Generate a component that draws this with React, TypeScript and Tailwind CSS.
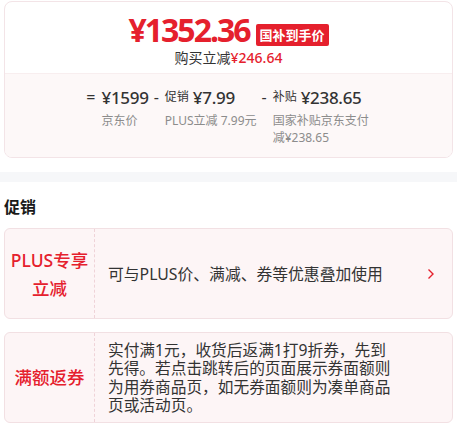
export default function App() {
  return (
    <div className="w-[457px] h-[436px] bg-white overflow-hidden font-['Noto_Sans','Noto_Sans_CJK_SC',sans-serif] text-[#333]">
      <div className="mx-[4px] mt-[1px] rounded-[8px] border border-[#f3e4e7] overflow-hidden">
        <div className="h-[71px] flex flex-col items-center pt-[11px]">
          <div className="flex items-end gap-[6px]">
            <span className="text-[32px] font-bold text-[#e5202d] tracking-[-2px] leading-[34px]">¥1352.36</span>
            <span className="bg-[#e5202d] text-white text-[13px] font-bold px-[4px] h-[22px] mb-[1px] rounded-[2px] flex items-center leading-none">国补到手价</span>
          </div>
          <div className="mt-[1px] text-[14px] leading-[20px]">
            <span className="text-[#333]">购买立减</span>
            <span className="text-[#e5202d] font-medium">¥246.64</span>
          </div>
        </div>
        <div className="h-[84px] bg-[#fdf8f8] border-t border-[#f8eeef] flex justify-center gap-[5px] pt-[12px]">
          <div className="flex gap-[6px]">
            <span className="text-[16px] leading-[22px]">=</span>
            <div className="flex flex-col">
              <div className="flex items-center h-[22px]">
                <span className="text-[17px] font-medium tracking-[-0.3px] leading-none">¥1599</span>
              </div>
              <div className="mt-[4px] text-[12px] leading-[17px] text-[#8c8c8c]">京东价</div>
            </div>
          </div>
          <div className="flex gap-[6px]">
            <span className="text-[16px] leading-[22px]">-</span>
            <div className="flex flex-col">
              <div className="flex items-center h-[22px] gap-[4px]">
                <span className="text-[12px] leading-none">促销</span>
                <span className="text-[17px] font-medium tracking-[-0.3px] leading-none">¥7.99</span>
              </div>
              <div className="mt-[4px] text-[12px] leading-[17px] text-[#8c8c8c] whitespace-nowrap">PLUS立减 7.99元</div>
            </div>
          </div>
          <div className="flex gap-[6px]">
            <span className="text-[16px] leading-[22px]">-</span>
            <div className="flex flex-col">
              <div className="flex items-center h-[22px] gap-[4px]">
                <span className="text-[12px] leading-none">补贴</span>
                <span className="text-[17px] font-medium tracking-[-0.3px] leading-none">¥238.65</span>
              </div>
              <div className="mt-[4px] text-[12px] leading-[17px] text-[#8c8c8c] w-[98px]">国家补贴京东支付减¥238.65</div>
            </div>
          </div>
        </div>
      </div>

      <div className="mt-[14px] h-[10px] bg-[#f6f7f9]" />

      <div className="px-[4px] pt-[13px]">
        <div className="text-[16px] font-bold leading-[24px] text-[#1a1a1a]">促销</div>
        <div className="mt-[9px] h-[91px] rounded-[6px] border border-[#f2e0e3] bg-[#fdf5f6] flex">
          <div className="w-[90px] shrink-0 border-r border-dashed border-[#efd3d8] flex flex-col items-center justify-center text-[#e5202d] text-[17.5px] font-medium leading-[28px]">
            <span>PLUS专享</span>
            <span>立减</span>
          </div>
          <div className="flex-1 flex items-center pl-[13px] pr-[14px]">
            <span className="flex-1 text-[15.8px] leading-[20px] text-[#333]">可与PLUS价、满减、券等优惠叠加使用</span>
            <svg width="8" height="12" viewBox="0 0 8 12" className="mr-[3px]">
              <path d="M1.5 1.5 L6 6 L1.5 10.5" fill="none" stroke="#e5202d" strokeWidth="1.4" />
            </svg>
          </div>
        </div>
        <div className="mt-[13px] h-[91px] rounded-[6px] border border-[#f2e0e3] bg-[#fdf5f6] flex">
          <div className="w-[90px] shrink-0 border-r border-dashed border-[#efd3d8] flex items-center justify-center text-[#e5202d] text-[17.5px] font-medium">
            满额返券
          </div>
          <div className="flex-1 flex items-center pl-[13px]">
            <span className="w-[290px] text-[15.7px] leading-[18.3px] text-[#333]">实付满1元，收货后返满1打9折券，先到先得。若点击跳转后的页面展示券面额则为用券商品页，如无券面额则为凑单商品页或活动页。</span>
          </div>
        </div>
      </div>
    </div>
  );
}
